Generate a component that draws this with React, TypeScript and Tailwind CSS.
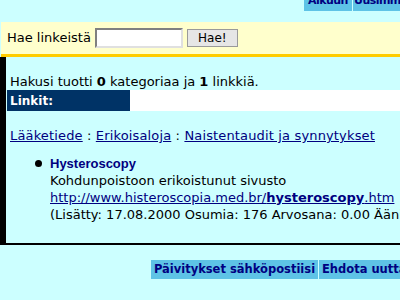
import React from 'react';

export default function App() {
    return (
        <div className="h-[300px] w-[400px] overflow-hidden bg-[#ccffff] font-['DejaVu_Sans',Verdana,sans-serif] text-[12px] text-black">
            {/* Top nav buttons, scrolled partly off */}
            <div className="-mt-[8px] flex h-[19px] gap-px whitespace-nowrap pl-[304px]">
                <div className="flex h-[19px] w-[48px] shrink-0 items-center justify-center overflow-hidden bg-[#5ec3e6] text-[11px] font-bold tracking-tighter text-[#000080]">Aikuun</div>
                <div className="flex h-[19px] items-center bg-[#5ec3e6] px-[1px] text-[11px] font-bold tracking-tighter text-[#000080]">Uusimmat</div>
            </div>

            {/* Search */}
            <div className="ml-px mt-[11px] flex h-[35px] items-center border-b-[3px] border-[#ffcc00] bg-[#ffffcc] pl-[6px]">
                <span className="text-[13px]">Hae linkeistä</span>
                <input className="ml-[4px] h-[20px] w-[88px] border-2 border-t-[#808080] border-l-[#808080] border-b-[#e0e0e0] border-r-[#e0e0e0] bg-white" />
                <button className="ml-[4px] h-[18px] w-[51px] border border-[#9a9a9a] bg-[#e6e6e6] text-[12px] leading-none text-black">Hae!</button>
            </div>

            {/* Results */}
            <div className="h-[188px] border-b-2 border-l-[6px] border-black pt-[16px]">
                <p className="pl-[4px] text-[13px] leading-[17px]">
                    Hakusi tuotti <b>0</b> kategoriaa ja <b>1</b> linkkiä.
                </p>
                <div className="ml-px flex h-[21px]">
                    <div className="flex w-[123px] items-center bg-[#003366] pl-[3px] text-[12px] font-bold text-white">Linkit:</div>
                    <div className="flex-1 bg-white"></div>
                </div>
                <p className="mt-[16px] whitespace-nowrap pl-[4px] text-[13px] leading-[17px] tracking-[0.15px]">
                    <a href="#" className="text-[#000080] underline">Lääketiede</a> : <a href="#" className="text-[#000080] underline">Erikoisaloja</a> : <a href="#" className="text-[#000080] underline">Naistentaudit ja synnytykset</a>
                </p>
                <div className="mt-[11px] flex pl-[29px]">
                    <span className="mr-[8px] mt-[5px] h-[7px] w-[7px] shrink-0 rounded-full bg-black"></span>
                    <div className="whitespace-nowrap text-[13px] leading-[17px]">
                        <a href="#" className="font-['Liberation_Sans',Arial,sans-serif] text-[13px] font-bold text-[#000080]">Hysteroscopy</a>
                        <div>Kohdunpoistoon erikoistunut sivusto</div>
                        <a href="#" className="text-[#000080] underline">http://www.histeroscopia.med.br/<b>hysteroscopy</b>.htm</a>
                        <div>(Lisätty: 17.08.2000 Osumia: 176 Arvosana: 0.00 Ääniä: 0)</div>
                    </div>
                </div>
            </div>

            {/* Bottom buttons */}
            <div className="mt-[15px] flex gap-px whitespace-nowrap pl-[151px]">
                <div className="flex h-[19px] w-[167px] shrink-0 items-center justify-center bg-[#5ec3e6] text-[11.5px] font-bold text-[#000080]">Päivitykset sähköpostiisi</div>
                <div className="flex h-[19px] items-center bg-[#5ec3e6] px-[3px] text-[11.5px] font-bold text-[#000080]">Ehdota uutta linkkiä</div>
            </div>
        </div>
    );
}
